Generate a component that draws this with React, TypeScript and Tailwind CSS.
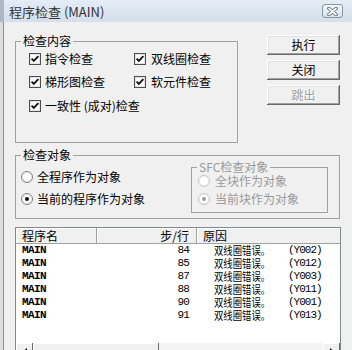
import React from "react";

function Check() {
  return (
    <svg width="12" height="12" viewBox="0 0 12 12" className="shrink-0">
      <rect x="0.5" y="0.5" width="11" height="11" fill="#fff" stroke="#4d4d4d" />
      <rect x="1.5" y="1.5" width="9" height="9" fill="none" stroke="#e4e4e4" />
      <path d="M2.6 5.6 L4.8 7.9 L9.4 3.2" fill="none" stroke="#111" strokeWidth="1.9" />
    </svg>
  );
}

function Radio({ on, disabled }: { on?: boolean; disabled?: boolean }) {
  return (
    <svg width="12" height="12" viewBox="0 0 12 12" className="shrink-0">
      <circle cx="6" cy="6" r="5.5" fill="#fff" stroke={disabled ? "#c2c2c2" : "#7e7e7e"} />
      <circle cx="6" cy="6" r="4.5" fill="none" stroke={disabled ? "#ececec" : "#dadada"} />
      {on && <circle cx="6" cy="6" r="2" fill={disabled ? "#9a9a9a" : "#111"} />}
    </svg>
  );
}

function Btn({ children, disabled }: { children: React.ReactNode; disabled?: boolean }) {
  return (
    <div
      className={
        "h-[20px] w-[73px] flex items-center justify-center bg-[#f0f0f0] leading-[14px] shadow-[inset_-1px_-1px_#696969,inset_1px_1px_#fff,inset_-2px_-2px_#a0a0a0,inset_2px_2px_#e3e3e3] " +
        (disabled ? "text-[#a0a0a0] [text-shadow:1px_1px_#fff]" : "text-black")
      }
    >
      {children}
    </div>
  );
}

const rows = [
  ["84", "Y002"],
  ["85", "Y012"],
  ["87", "Y003"],
  ["88", "Y011"],
  ["90", "Y001"],
  ["91", "Y013"],
];

export default function App() {
  return (
    <div className="w-[352px] h-[350px] overflow-hidden flex bg-[#f0f0f0] font-['Noto_Sans_CJK_SC',sans-serif] text-[12px] leading-[14px] text-black">
      <div className="w-[4px] shrink-0 flex flex-col">
        <div className="h-[22px] bg-[#aeb8c4]" />
        <div className="flex-1 bg-[#dcdcdc] border-r border-[#8f8f8f]" />
      </div>
      <div className="flex-1 min-w-0 flex flex-col">
        {/* title bar */}
        <div className="h-[22px] shrink-0 flex items-center pl-[5px] pr-[9px] bg-gradient-to-b from-[#e4ecf5] to-[#d4dfeb]">
          <span className="text-[13px] leading-[16px] text-[#333] pt-[2px]">程序检查 (MAIN)</span>
          <div className="ml-auto w-[21px] h-[14px] rounded-[3px] border border-[#8995a4] bg-gradient-to-b from-[#f4f7fb] to-[#d9e2ec] flex items-center justify-center">
            <svg width="11" height="9" viewBox="0 0 11 9">
              <path d="M2 1.5 L9 7.5 M9 1.5 L2 7.5" stroke="#5d6876" strokeWidth="3.6" strokeLinecap="round" />
              <path d="M2 1.5 L9 7.5 M9 1.5 L2 7.5" stroke="#fff" strokeWidth="1.8" strokeLinecap="round" />
            </svg>
          </div>
        </div>

        {/* body */}
        <div className="shrink-0 pl-[11px] pt-[12px] flex flex-col">
          <div className="flex items-start">
            <fieldset className="w-[223px] h-[109px] border border-[#a0a0a0]">
              <legend className="ml-[5px] px-[2px] leading-[14px]">检查内容</legend>
              <div className="pl-[13px] pt-[3px] flex flex-col">
                <div className="flex h-[16px] items-center">
                  <div className="w-[105px] flex items-center gap-[4px]">
                    <Check />
                    <span>指令检查</span>
                  </div>
                  <div className="flex items-center gap-[5px]">
                    <Check />
                    <span>双线圈检查</span>
                  </div>
                </div>
                <div className="flex h-[16px] items-center mt-[7px]">
                  <div className="w-[105px] flex items-center gap-[4px]">
                    <Check />
                    <span>梯形图检查</span>
                  </div>
                  <div className="flex items-center gap-[5px]">
                    <Check />
                    <span>软元件检查</span>
                  </div>
                </div>
                <div className="flex h-[16px] items-center mt-[8px] gap-[4px]">
                  <Check />
                  <span>一致性 (成对)检查</span>
                </div>
              </div>
            </fieldset>
            <div className="ml-[29px] mt-[1px] flex flex-col gap-[5px]">
              <Btn>执行</Btn>
              <Btn>关闭</Btn>
              <Btn disabled>跳出</Btn>
            </div>
          </div>

          <fieldset className="mt-[5px] w-[325px] h-[71px] border border-[#a0a0a0]">
            <legend className="ml-[5px] px-[2px] leading-[14px]">检查对象</legend>
            <div className="flex">
              <div className="w-[175px] pl-[5px] pt-[8px] flex flex-col gap-[8px]">
                <div className="h-[14px] flex items-center gap-[4px]">
                  <Radio />
                  <span>全程序作为对象</span>
                </div>
                <div className="h-[14px] flex items-center gap-[4px]">
                  <Radio on />
                  <span>当前的程序作为对象</span>
                </div>
              </div>
              <fieldset className="-mt-[2px] w-[137px] h-[53px] border border-[#a0a0a0]">
                <legend className="ml-[5px] px-[2px] leading-[14px] text-[#9a9a9a]">SFC检查对象</legend>
                <div className="pl-[6px] flex flex-col gap-[4px] text-[#9a9a9a]">
                  <div className="h-[14px] flex items-center gap-[5px]">
                    <Radio disabled />
                    <span>全块作为对象</span>
                  </div>
                  <div className="h-[14px] flex items-center gap-[5px]">
                    <Radio on disabled />
                    <span>当前块作为对象</span>
                  </div>
                </div>
              </fieldset>
            </div>
          </fieldset>

          {/* list */}
          <div className="mt-[8px] w-[326px] h-[134px] border border-[#828790] bg-white flex flex-col">
            <div className="h-[16px] shrink-0 flex bg-[#f0f0f0] border-b border-[#a0a0a0] leading-[15px]">
              <div className="w-[81px] pl-[6px] border-r border-[#a0a0a0] shadow-[inset_1px_1px_#fff]">程序名</div>
              <div className="w-[100px] pr-[7px] text-right border-r border-[#a0a0a0] shadow-[inset_1px_1px_#fff]">步/行</div>
              <div className="flex-1 pl-[6px] shadow-[inset_1px_1px_#fff]">原因</div>
            </div>
            <div className="flex-1 min-h-0 overflow-hidden flex flex-col">
              {rows.map(([n, y]) => (
                <div key={y} className="h-[13px] shrink-0 flex items-center">
                  <div className="w-[81px] pl-[6px] font-['Liberation_Mono',monospace] font-bold text-[11px] tracking-[-0.6px] leading-[13px]">MAIN</div>
                  <div className="w-[100px] pr-[8px] text-right font-['Liberation_Mono',monospace] text-[11px] tracking-[-0.8px] leading-[13px]">{n}</div>
                  <div className="flex-1 pl-[17px] flex items-center whitespace-nowrap">
                    <span className="inline-block w-[66px] text-[11px] leading-[13px] origin-left scale-x-[0.85]">双线圈错误。</span>
                    <span className="ml-[8px] font-['Liberation_Mono',monospace] text-[11px] tracking-[-1px] leading-[13px]">({y})</span>
                  </div>
                </div>
              ))}
            </div>
            <div className="h-[17px] shrink-0 flex bg-[#f4f4f4]">
              <div className="w-[17px] bg-[#f0f0f0] shadow-[inset_-1px_-1px_#696969,inset_1px_1px_#fff] flex items-center justify-center">
                <svg width="4" height="7" viewBox="0 0 4 7"><path d="M4 0 L0 3.5 L4 7 Z" fill="#000" /></svg>
              </div>
              <div className="w-[126px] bg-[#f0f0f0] shadow-[inset_-1px_-1px_#696969,inset_1px_1px_#fff]" />
              <div className="flex-1" />
              <div className="w-[17px] bg-[#f0f0f0] shadow-[inset_-1px_-1px_#696969,inset_1px_1px_#fff] flex items-center justify-center">
                <svg width="4" height="7" viewBox="0 0 4 7"><path d="M0 0 L4 3.5 L0 7 Z" fill="#000" /></svg>
              </div>
            </div>
          </div>
        </div>
      </div>
    </div>
  );
}
